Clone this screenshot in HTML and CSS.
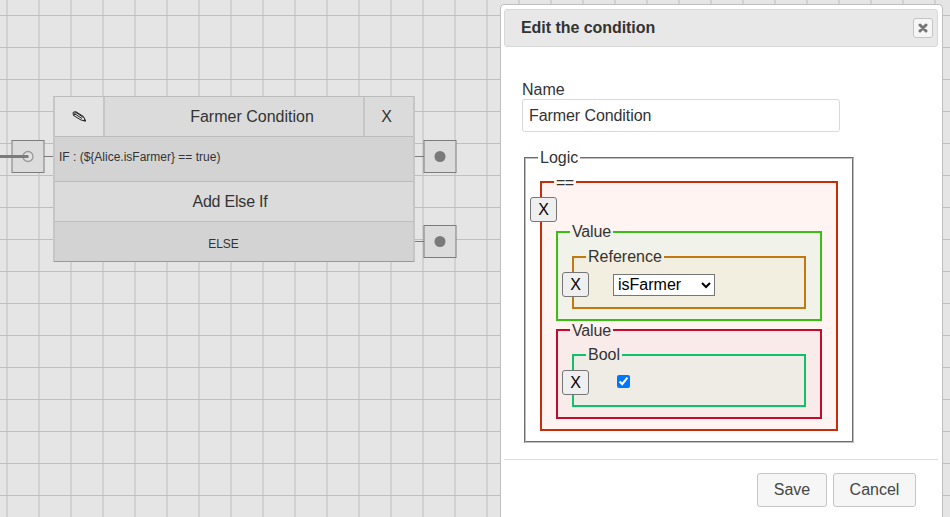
FILE: index.html
```
<!DOCTYPE html>
<html lang="en">
<head>
<meta charset="utf-8">
<title>Edit the condition</title>
<link rel="stylesheet" href="styles.css">
</head>
<body>
<main class="canvas">
  <svg class="wires" width="500" height="300">
    <path d="M44 156.500H54M414 156.500H424M414 241.500H424" stroke="#7a7a7a"/>
    <g fill="#dcdcdc" stroke="#7c7c7c">
      <rect x="12" y="140.500" width="32" height="32"/>
      <rect x="424" y="140.500" width="32" height="32"/>
      <rect x="424" y="225.500" width="32" height="32"/>
    </g>
    <circle cx="28" cy="156.500" r="5" fill="#e2e2e2" stroke="#999" stroke-width="1.300"/>
    <path d="M0 156.500H28.500" stroke="#7b7b7b" stroke-width="3"/>
    <g fill="#7a7a7a"><circle cx="440" cy="156.500" r="5.500"/><circle cx="440" cy="241.500" r="5.500"/></g>
  </svg>
  <section class="node">
    <header class="node-head">
      <div class="edit"><svg width="16" height="14" viewBox="0 0 16 14"><path d="M2 2.500L4.500 1.500L12.500 6.500L14.500 11L10 10L2.500 5.500ZM4 4L11 8.500M5 2.500L12.500 7.500M4.500 2L3 5.500M12 10.500L14.500 11L13.500 9" fill="none" stroke="#222" stroke-width="1"/></svg></div>
      <div class="node-title">Farmer Condition</div>
      <div class="remove">X</div>
    </header>
    <div class="if-row"><span class="if-text">IF : (${Alice.isFarmer} == true)</span></div>
    <div class="add-row"><span>Add Else If</span></div>
    <div class="else-row"><span>ELSE</span></div>
  </section>
</main>
<section class="dialog">
  <header class="dialog-head">
    <h1>Edit the condition</h1>
    <button class="close" aria-label="Close"><svg width="10" height="10" viewBox="0 0 10 10"><path d="M2 2L8 8M8 2L2 8" stroke="#777" stroke-width="3" stroke-linecap="round"/></svg></button>
  </header>
  <div class="dialog-body">
    <label class="name-label" for="name">Name</label>
    <input class="name" id="name" type="text" value="Farmer Condition">
    <fieldset class="logic">
      <legend>Logic</legend>
      <fieldset class="equals">
        <legend>==</legend>
        <div class="row row-equals"><button class="x">X</button></div>
        <fieldset class="value value-left">
          <legend>Value</legend>
          <fieldset class="reference">
            <legend>Reference</legend>
            <div class="row"><button class="x">X</button><select class="select"><option>isFarmer</option></select></div>
          </fieldset>
        </fieldset>
        <fieldset class="value value-right">
          <legend>Value</legend>
          <fieldset class="bool">
            <legend>Bool</legend>
            <div class="row"><button class="x">X</button><input class="check" type="checkbox" checked></div>
          </fieldset>
        </fieldset>
      </fieldset>
    </fieldset>
  </div>
  <footer class="dialog-foot"><button class="btn">Save</button><button class="btn cancel">Cancel</button></footer>
</section>
</body>
</html>
```
FILE: styles.css
```
* { box-sizing: border-box; }
body {
  margin: 0;
  width: 950px;
  height: 517px;
  overflow: hidden;
  position: relative;
  font: 16px/18px "Liberation Sans", Arial, sans-serif;
  color: #333;
}
button, input, select { font: inherit; margin: 0; }
.canvas {
  position: relative;
  height: 517px;
  background:
    repeating-linear-gradient(to bottom, transparent 0 15px, #bfbfbf 15px 16px, transparent 16px 32px),
    repeating-linear-gradient(to right, transparent 0 6px, #d1d1d1 6px 8px, transparent 8px 32px),
    #e5e5e5;
}
.wires { position: absolute; left: 0; top: 0; }
.node {
  position: absolute;
  left: 53px;
  top: 96px;
  width: 362px;
  height: 166px;
  border: solid #c6c6c6;
  border-width: 1px 2px;
  border-top-color: #bcbcbc;
  border-bottom-color: #999;
  background: #dbdbdb;
}
.node-head { display: flex; height: 39px; line-height: 39px; text-align: center; }
.edit { width: 50px; background: #e3e3e3; border-right: 2px solid #c6c6c6; display: flex; align-items: center; justify-content: center; padding-top: 1px; }
.node-title { flex: 1; padding-left: 36px; }
.remove { width: 50px; padding-right: 5px; border-left: 2px solid #c6c6c6; }
.if-row { height: 45px; border-top: 1px solid #bcbcbc; background: #d3d3d3; font-size: 12px; line-height: 40px; padding-left: 4px; }
.add-row { height: 40px; border-top: 1px solid #bcbcbc; text-align: center; line-height: 40px; padding-right: 8px; letter-spacing: -0.2px; }
.else-row { height: 40px; border-top: 1px solid #bcbcbc; background: #d3d3d3; text-align: center; font-size: 12px; line-height: 44px; padding-right: 21px; }
.dialog {
  position: absolute;
  left: 500px;
  top: 4px;
  width: 443px;
  height: 530px;
  padding: 4px 4px 4px 3px;
  border: 1px solid #bfbfbf;
  border-radius: 4px;
  background: #fff;
}
.dialog-head {
  height: 38px;
  width: 434px;
  padding: 0 4px 0 16px;
  border: 1px solid #d9d9d9;
  border-radius: 3px;
  background: #e8e8e8;
  display: flex;
  align-items: center;
  justify-content: space-between;
}
.dialog-head h1 { margin: 0; font-size: 16px; line-height: 18px; letter-spacing: -0.05px; }
.close { width: 20px; height: 20px; padding: 0; border: 1px solid #c5c5c5; border-radius: 3px; background: #f6f6f6; display: flex; align-items: center; justify-content: center; }
.dialog-body { padding: 34px 17px 0 18px; height: 412px; }
.name-label { display: block; height: 18px; }
.name { display: block; width: 318px; height: 33px; padding: 0 6px; border: 1px solid #d9d9d9; border-radius: 3px; color: #333; background: #fff; letter-spacing: -0.08px; }
fieldset { margin: 0 2px; min-width: 0; padding: 6px 12px 10px; border: 2px solid; }
legend { height: 18px; padding: 0 2px; }
.logic { width: 330px; margin-top: 17px; border: 2px groove #c0c0c0; }
.equals { border-color: #c62d0b; background: #fff4f2; }
.equals > legend { padding: 0 2px; line-height: 20px; letter-spacing: -0.5px; }
.value { padding-top: 7px; }
.value > legend { letter-spacing: -0.15px; }
.value-left { border-color: #39bf14; background: #f1f3ea; }
.value-right { border-color: #c40a2d; background: #f9ebe9; }
.value-right > legend { line-height: 20px; }
.reference { border-color: #c27a10; background: #f2eee0; }
.bool { border-color: #10c16c; background: #efece6; }
.row { display: flex; height: 25px; align-items: center; margin-left: -24px; }
.row-equals { height: 26px; align-items: flex-start; }
.x { width: 27px; height: 25px; padding: 0; border: 1px solid #767676; border-radius: 3px; background: #efefef; color: #000; }
.select { width: 102px; height: 22px; margin-left: 24px; border: 1px solid #767676; background: #fff; color: #000; }
.check { width: 13px; height: 13px; margin: 0 0 2px 28px; }
.dialog-foot { width: 434px; border-top: 1px solid #ddd; padding: 13px 22px 0 0; display: flex; justify-content: flex-end; gap: 6px; }
.btn { width: 70px; height: 34px; padding: 0; border: 1px solid #c5c5c5; border-radius: 3px; background: #f6f6f6; color: #454545; }
.cancel { width: 83px; }
```
